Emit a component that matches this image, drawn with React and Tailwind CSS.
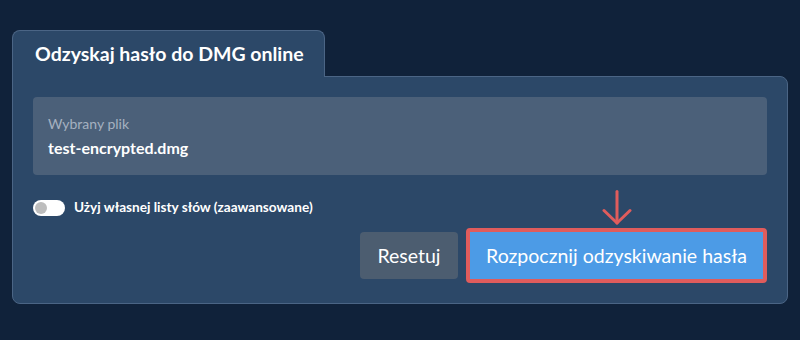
export default function App() {
  return (
    <div className="w-[800px] h-[340px] bg-[#10223a] pt-[30px] px-[12px] font-['Lato','Liberation_Sans',sans-serif] text-white">
      <div className="w-[776px]">
        <div className="relative z-10 -mb-px flex h-[47px] w-[313px] items-center rounded-t-lg border-x border-t border-[#4b6585] bg-[#2c4868] pl-[22px]">
          <h1 className="text-[19.5px] font-bold leading-none">Odzyskaj hasło do DMG online</h1>
        </div>
        <div className="rounded-b-lg rounded-tr-lg border border-[#4b6585] bg-[#2c4868] p-[20px]">
          <div className="flex h-[78px] flex-col justify-center gap-[9px] rounded-[4px] bg-[#4b6079] px-[15px]">
            <span className="text-[14px] leading-none text-[#a5b1c0]">Wybrany plik</span>
            <span className="text-[16px] font-bold leading-none">test-encrypted.dmg</span>
          </div>
          <div className="mt-[25px] flex h-[16px] items-center gap-[9px]">
            <span className="flex h-[16px] w-[32px] items-center rounded-full bg-white px-[2px]">
              <span className="h-[12px] w-[12px] rounded-full bg-[#bdbdbd]" />
            </span>
            <span className="text-[13.6px] font-bold leading-none">Użyj własnej listy słów (zaawansowane)</span>
          </div>
          <div className="mt-[12px] flex h-[55px] items-center justify-end gap-[8px]">
            <button className="h-[47px] w-[98px] rounded-[4px] bg-[#4c5d70] text-[19.5px] leading-none text-white">
              Resetuj
            </button>
            <div className="relative">
              <svg className="absolute left-1/2 top-[-38px] -translate-x-1/2" width="30" height="36" viewBox="0 0 30 36" fill="none" stroke="#e05c5c" strokeWidth="3" strokeLinecap="round" strokeLinejoin="round">
                <path d="M15 1.5V33" />
                <path d="M2 20.5L15 33L28 20.5" />
              </svg>
              <button className="block h-[55px] w-[301px] rounded-[4px] border-4 border-[#e05c5c] bg-[#4c9be6] text-[19.5px] leading-none text-white">
                Rozpocznij odzyskiwanie hasła
              </button>
            </div>
          </div>
        </div>
      </div>
    </div>
  );
}
